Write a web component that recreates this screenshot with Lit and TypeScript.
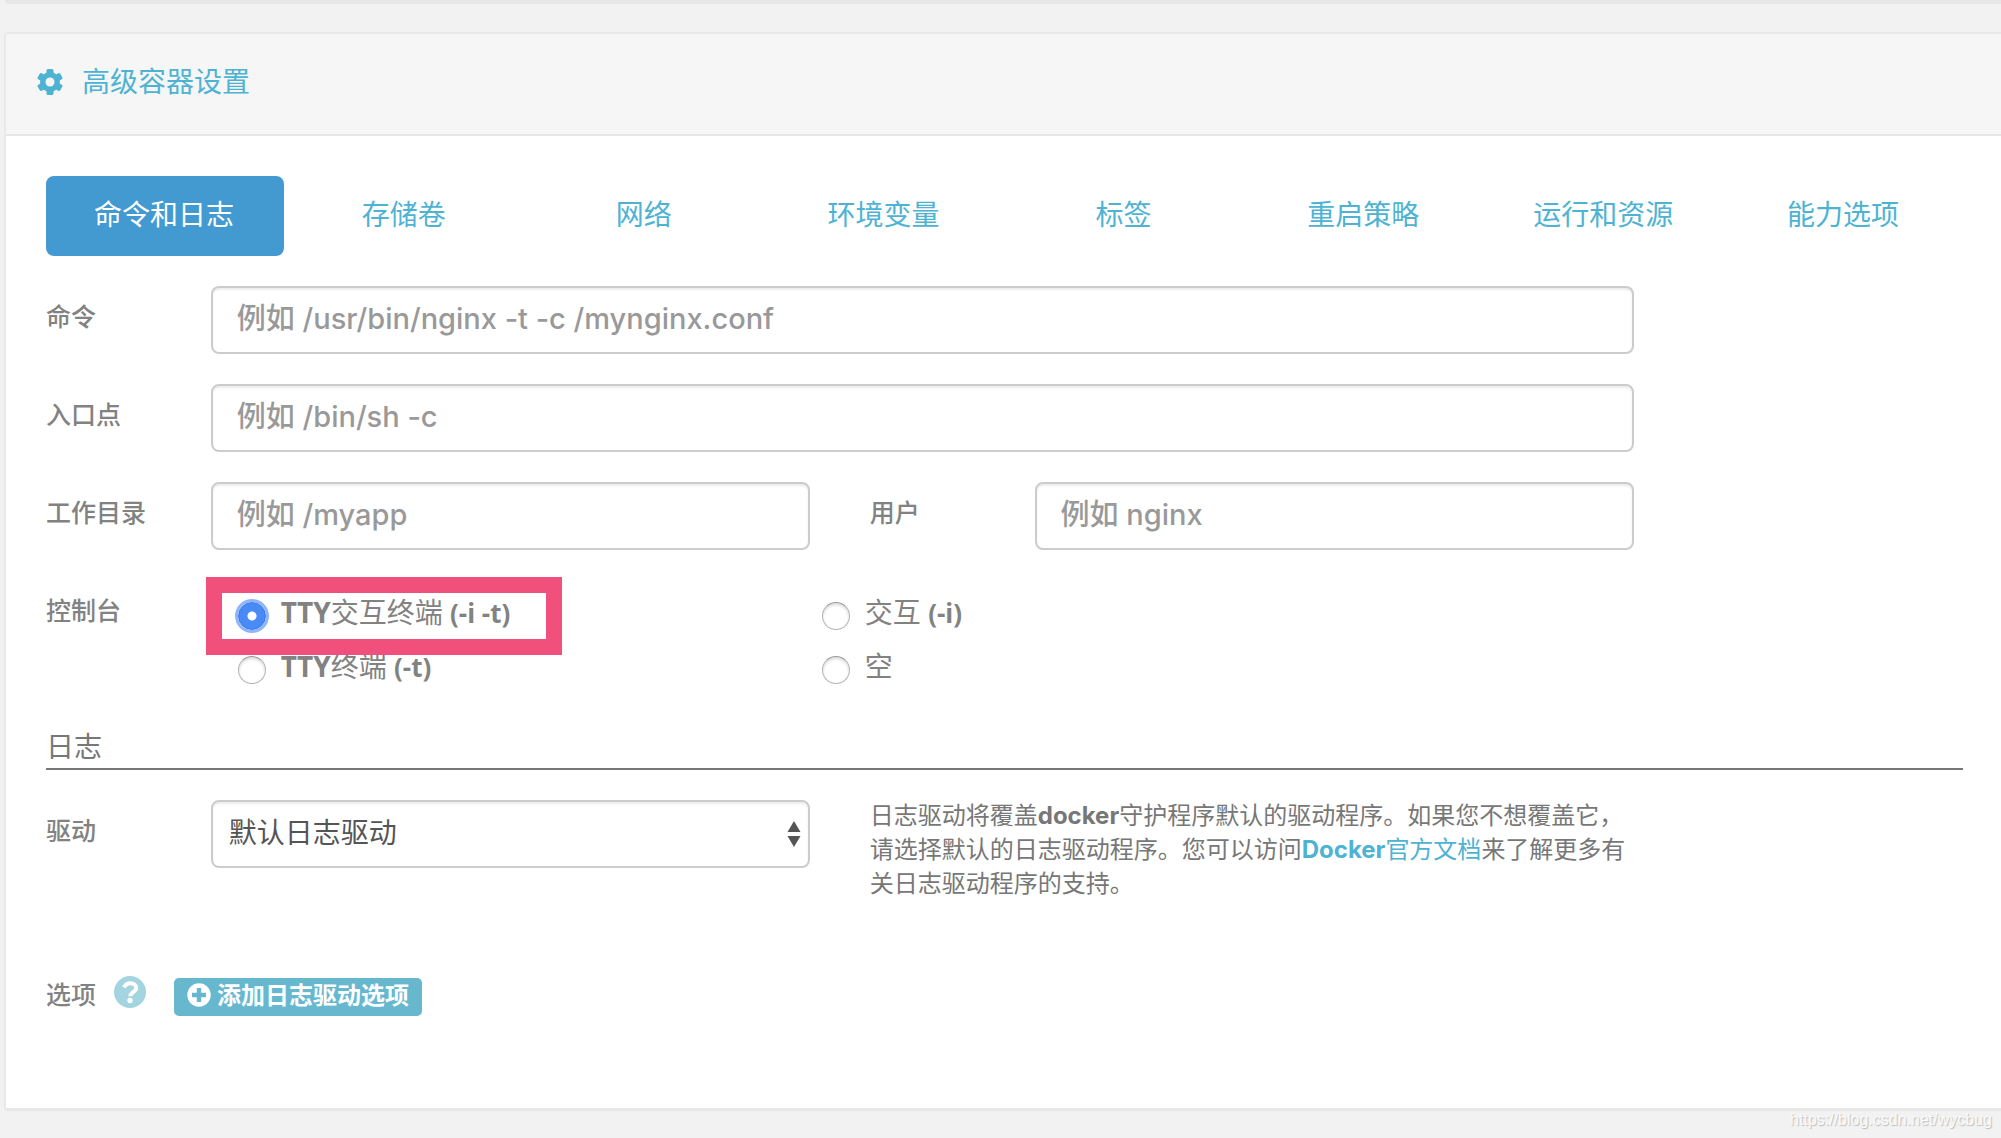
import { LitElement, html, css } from "lit";
import { customElement, state } from "lit/decorators.js";

const TABS = ["命令和日志", "存储卷", "网络", "环境变量", "标签", "重启策略", "运行和资源", "能力选项"];

const CONSOLES = [
  { id: "both", pre: "TTY", cjk: "交互终端", flags: "(-i -t)" },
  { id: "interactive", pre: "", cjk: "交互", flags: "(-i)" },
  { id: "tty", pre: "TTY", cjk: "终端", flags: "(-t)" },
  { id: "none", pre: "", cjk: "空", flags: "" },
];

@customElement("app-root")
export class AppRoot extends LitElement {
  @state() private tab = 0;
  @state() private console = "both";

  static styles = css`
    :host {
      display: block;
      min-height: 100vh;
      box-sizing: border-box;
      overflow: hidden;
      background: #f2f2f2;
      color: #777;
      font-family: Inter, "Noto Sans CJK SC", sans-serif;
      font-size: 28px;
      line-height: 40px;
    }
    *, *::before, *::after { box-sizing: border-box; }
    input, select, button { font: inherit; margin: 0; }
    a { color: #4eb3d3; text-decoration: none; }

    .previous {
      height: 4px;
      margin-left: 5px;
      background: #e7e7e7;
      border-radius: 0 0 0 4px;
    }
    .panel {
      margin: 28px 0 0 4px;
      border: 2px solid #e9e9e9;
      border-right: 0;
      border-bottom: 3px solid #e7e7e7;
      border-radius: 4px 0 0 4px;
      background: #fff;
    }
    .head {
      display: flex;
      align-items: center;
      gap: 18px;
      height: 102px;
      padding: 0 32px 4px 31px;
      border-bottom: 2px solid #e7e7e7;
      background: #f6f6f6;
      color: #4eb3d3;
    }
    .head h2 { margin: 0; font-size: 28px; font-weight: 400; }
    .gear { width: 27px; height: 27px; }
    .body { padding: 40px 38px 92px 40px; }

    .tabs {
      display: grid;
      grid-template-columns: repeat(8, 1fr);
      gap: 2px;
      margin-bottom: 30px;
    }
    .tab {
      height: 80px;
      padding: 0 2px 2px 0;
      border: 0;
      border-radius: 8px;
      background: transparent;
      color: #4eb3d3;
    }
    .tab.active { background: #439ad1; color: #fff; }

    .row {
      display: grid;
      grid-template-columns: repeat(12, 1fr);
      column-gap: 60px;
      align-items: start;
      margin-bottom: 30px;
    }
    .name {
      padding-top: 13px;
      font-size: 25px;
      line-height: 36px;
      font-weight: 500;
      color: #828282;
      white-space: nowrap;
    }
    .wide { grid-column: span 9; }
    .half { grid-column: span 4; }
    .rest { grid-column: span 11; }

    .field {
      width: 100%;
      height: 68px;
      padding: 0 24px 3px;
      border: 2px solid #ccc;
      border-radius: 8px;
      background: #fff;
      box-shadow: inset 0 2px 2px rgba(0, 0, 0, 0.08);
      color: #555;
    }
    input.field { font-size: 29px; font-weight: 500; }
    .field::placeholder { color: #999; opacity: 1; }

    .choices {
      display: grid;
      grid-template-columns: repeat(3, 1fr);
      padding-top: 7px;
    }
    .choice {
      display: flex;
      align-items: center;
      gap: 15px;
      height: 54px;
      padding-left: 27px;
      color: #828282;
    }
    .choice.left { grid-column: 1; }
    .choice-text {
      padding-bottom: 4px;
      font-family: "Open Sans", "Noto Sans CJK SC", sans-serif;
      white-space: nowrap;
    }
    .latin { font-weight: 700; }
    .flags { font-size: 26px; font-weight: 700; }
    .radio {
      appearance: none;
      flex: none;
      width: 28px;
      height: 28px;
      margin-top: 3px;
      border: 1px solid #b4b4b4;
      border-top-color: #999;
      border-radius: 50%;
      background: #fff;
      box-shadow: inset 0 2px 3px rgba(0, 0, 0, 0.15);
    }
    .radio:checked {
      border: 1px solid #2f78f0;
      background: radial-gradient(circle, #fff 0 4px, #4a8af5 5px);
      box-shadow: 0 0 0 3px #8db5f8;
    }
    .marked { position: relative; }
    .marked::after {
      content: "";
      position: absolute;
      inset: -10px auto auto -5px;
      width: 356px;
      height: 78px;
      border: 16px solid #f1507d;
      pointer-events: none;
    }

    .section {
      margin: 33px 0 30px;
      padding: 1px 0 2px;
      border-bottom: 2px solid #777;
      font-size: 28px;
      line-height: 37px;
      font-weight: 400;
    }
    .pick { position: relative; }
    .pick select { appearance: none; display: block; padding: 0 40px 3px 16px; }
    .arrows {
      position: absolute;
      right: 9px;
      top: 20px;
      width: 14px;
      height: 28px;
      pointer-events: none;
    }
    .hint {
      grid-column: span 5;
      margin: -1px 0 0;
      font-size: 24px;
      line-height: 34px;
    }

    .options { display: flex; align-items: center; padding-top: 45px; }
    .options .name { padding: 0 0 2px; }
    .help { width: 32px; height: 32px; margin: 0 28px 8px 18px; }
    .add {
      display: flex;
      align-items: center;
      gap: 6px;
      height: 38px;
      margin-top: 2px;
      padding: 0 13px 3px;
      border: 0;
      border-radius: 5px;
      background: #67b8cf;
      color: #fff;
      font-size: 24px;
      line-height: 34px;
      font-weight: 700;
    }
    .add svg { width: 24px; height: 24px; margin-top: -1px; }

    .mark {
      padding: 0 9px 0 0;
      text-align: right;
      font-family: "Liberation Sans", sans-serif;
      font-size: 16px;
      line-height: 18px;
      color: #fafafa;
      text-shadow: 1px 1px 1px #bbb;
    }
  `;

  private choice(c: (typeof CONSOLES)[number], i: number) {
    return html`<label class="choice ${i % 2 ? "" : "left"} ${i === 0 ? "marked" : ""}">
      <input class="radio" type="radio" name="console" .checked=${this.console === c.id}
        @change=${() => (this.console = c.id)} />
      <span class="choice-text"><span class="latin">${c.pre}</span>${c.cjk} <span class="flags">${c.flags}</span></span>
    </label>`;
  }

  render() {
    return html`
      <div class="previous"></div>
      <section class="panel">
        <header class="head">
          <svg class="gear" viewBox="0 0 27 27" fill="none" aria-hidden="true">
            <g fill="currentColor">
              <circle cx="13" cy="13" r="10" />
              <rect x="9.5" y="0" width="7" height="26" rx="1.5" />
              <rect x="9.5" y="0" width="7" height="26" rx="1.5" transform="rotate(60 13 13)" />
              <rect x="9.5" y="0" width="7" height="26" rx="1.5" transform="rotate(120 13 13)" />
            </g>
            <circle cx="13" cy="13" r="4.5" fill="#f6f6f6" />
          </svg>
          <h2>高级容器设置</h2>
        </header>
        <div class="body">
          <nav class="tabs">
            ${TABS.map((t, i) => html`<button class="tab ${i === this.tab ? "active" : ""}"
              @click=${() => (this.tab = i)}>${t}</button>`)}
          </nav>
          <div class="row">
            <label class="name" for="cmd">命令</label>
            <div class="wide"><input class="field" id="cmd" placeholder="例如 /usr/bin/nginx -t -c /mynginx.conf" /></div>
          </div>
          <div class="row">
            <label class="name" for="entry">入口点</label>
            <div class="wide"><input class="field" id="entry" placeholder="例如 /bin/sh -c" /></div>
          </div>
          <div class="row">
            <label class="name" for="dir">工作目录</label>
            <div class="half"><input class="field" id="dir" placeholder="例如 /myapp" /></div>
            <label class="name" for="user">用户</label>
            <div class="half"><input class="field" id="user" placeholder="例如 nginx" /></div>
          </div>
          <div class="row">
            <span class="name" id="console-name">控制台</span>
            <div class="rest choices" role="radiogroup" aria-labelledby="console-name">
              ${CONSOLES.map((c, i) => this.choice(c, i))}
            </div>
          </div>
          <h3 class="section">日志</h3>
          <div class="row">
            <label class="name" for="driver">驱动</label>
            <div class="half pick">
              <select class="field" id="driver"><option>默认日志驱动</option></select>
              <svg class="arrows" viewBox="0 0 14 28" fill="#555" aria-hidden="true">
                <path d="M7 1 13.5 12H.5ZM7 27 .5 16h13Z" />
              </svg>
            </div>
            <p class="hint">日志驱动将覆盖<span class="latin">docker</span>守护程序默认的驱动程序。如果您不想覆盖它，请选择默认的日志驱动程序。您可以访问<a href="#"><span class="latin">Docker</span>官方文档</a>来了解更多有关日志驱动程序的支持。</p>
          </div>
          <div class="options">
            <span class="name">选项</span>
            <svg class="help" viewBox="0 0 32 32" aria-hidden="true">
              <circle cx="16" cy="16" r="16" fill="#a3d4e0" />
              <path d="M10 11.5C11.3 8.600 13.400 7.200 16.300 7.200c3.500 0 5.900 1.900 5.900 4.800 0 3.900-5.900 4-5.900 8.300" fill="none" stroke="#fff" stroke-width="4" />
              <circle cx="16" cy="24.500" r="2.700" fill="#fff" />
            </svg>
            <button class="add">
              <svg viewBox="0 0 24 24" aria-hidden="true">
                <circle cx="12" cy="12" r="11.700" fill="#fff" />
                <path d="M12 5v14M5 12h14" stroke="#67b8cf" stroke-width="4.400" />
              </svg>
              添加日志驱动选项
            </button>
          </div>
        </div>
      </section>
      <div class="mark">https://blog.csdn.net/wycbug</div>
    `;
  }
}
